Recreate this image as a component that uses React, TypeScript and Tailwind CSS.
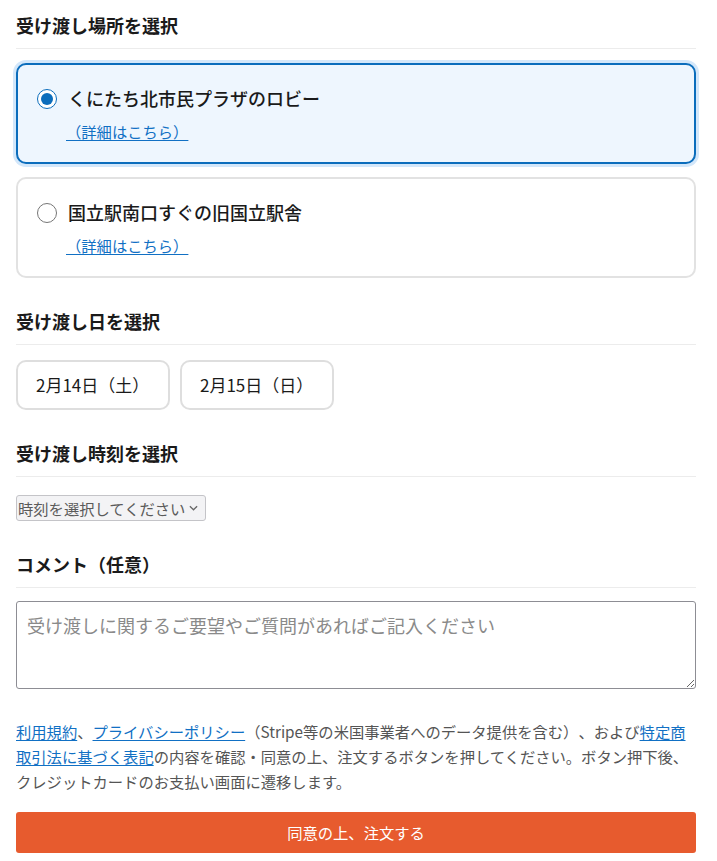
import { useState } from "react"

const places = [
  { id: "plaza", name: "くにたち北市民プラザのロビー" },
  { id: "station", name: "国立駅南口すぐの旧国立駅舎" },
]

const dates = ["2月14日（土）", "2月15日（日）"]

function Heading({ children, className = "" }: { children: React.ReactNode; className?: string }) {
  return (
    <h2
      className={`text-[18px] leading-[27px] font-bold text-[#1a1a1a] pb-[9px] border-b border-[#ececec] ${className}`}
    >
      {children}
    </h2>
  )
}

export default function App() {
  const [place, setPlace] = useState("plaza")

  return (
    <div
      className="min-h-screen bg-white pl-4 pr-[21px] pt-3 pb-4 text-[#222] [text-spacing-trim:space-all]"
      style={{ fontFamily: '"Noto Sans CJK JP", "Noto Sans", sans-serif' }}
    >
      {/* 受け渡し場所 */}
      <Heading>受け渡し場所を選択</Heading>
      <div className="mt-[14px] flex flex-col gap-[13px]">
        {places.map((p) => {
          const active = place === p.id
          return (
            <label
              key={p.id}
              className={`block rounded-[10px] border-2 py-5 pl-[19px] pr-5 cursor-pointer ${
                active
                  ? "border-[#0b6dbc] bg-[#eef6fe] shadow-[0_0_0_3px_#d3e7fa]"
                  : "border-[#e2e2e2] bg-white"
              }`}
            >
              <div className="flex items-center gap-[11px] h-[27px]">
                <input
                  type="radio"
                  name="place"
                  checked={active}
                  onChange={() => setPlace(p.id)}
                  className="m-0 w-5 h-5 shrink-0 accent-[#0b6dbc]"
                />
                <span className="text-[18px] leading-[27px] font-medium text-[#1a1a1a]">{p.name}</span>
              </div>
              <div className="mt-2 pl-[29px] h-[22px] text-[15.3px] leading-[22px]">
                <a href="#" className="text-[#1170c4] underline underline-offset-2">
                  （詳細はこちら）
                </a>
              </div>
            </label>
          )
        })}
      </div>

      {/* 受け渡し日 */}
      <Heading className="mt-[30px]">受け渡し日を選択</Heading>
      <div className="mt-[15px] flex gap-[10px]">
        {dates.map((d) => (
          <button
            key={d}
            type="button"
            className="h-[50px] w-[154px] rounded-[10px] border-2 border-[#dedede] bg-white pl-[18px] text-left text-[17px] text-[#1a1a1a]"
          >
            {d}
          </button>
        ))}
      </div>

      {/* 受け渡し時刻 */}
      <Heading className="mt-[30px]">受け渡し時刻を選択</Heading>
      <div className="mt-[18px] h-[26px]">
        <div className="relative inline-flex align-top">
          <select className="appearance-none h-[26px] w-[190px] rounded-[3px] border border-[#c4c4c8] bg-[#f3f3f5] pl-[1px] pr-5 text-[15.3px] leading-[24px] text-[#5a5a5a]">
            <option>時刻を選択してください</option>
          </select>
          <svg
            viewBox="0 0 10 6"
            className="pointer-events-none absolute right-[8px] top-[10px] w-[9px] h-[6px]"
            fill="none"
            stroke="#666"
            strokeWidth="1.4"
          >
            <path d="M1 1l4 4 4-4" />
          </svg>
        </div>
      </div>

      {/* コメント */}
      <Heading className="mt-[30px]">コメント（任意）</Heading>
      <textarea
        placeholder="受け渡しに関するご要望やご質問があればご記入ください"
        className="mt-[13px] block w-full h-[88px] rounded-[3px] border border-[#8d8d94] px-[10px] py-[10px] text-[18px] leading-[27px] text-[#222] placeholder:text-[#8a8a8a]"
      />

      {/* 同意文 */}
      <p className="mt-[30px] text-[15.3px] leading-[25px] text-[#555]">
        <a href="#" className="text-[#1170c4] underline underline-offset-2">利用規約</a>、
        <a href="#" className="text-[#1170c4] underline underline-offset-2">プライバシーポリシー</a>
        （Stripe等の米国事業者へのデータ提供を含む）、および
        <a href="#" className="text-[#1170c4] underline underline-offset-2">特定商取引法に基づく表記</a>
        の内容を確認・同意の上、注文するボタンを押してください。ボタン押下後、クレジットカードのお支払い画面に遷移します。
      </p>

      <button
        type="button"
        className="mt-[18px] block w-full h-[41px] rounded-[3px] bg-[#e75b2e] text-[15.3px] text-white"
      >
        同意の上、注文する
      </button>
    </div>
  )
}
